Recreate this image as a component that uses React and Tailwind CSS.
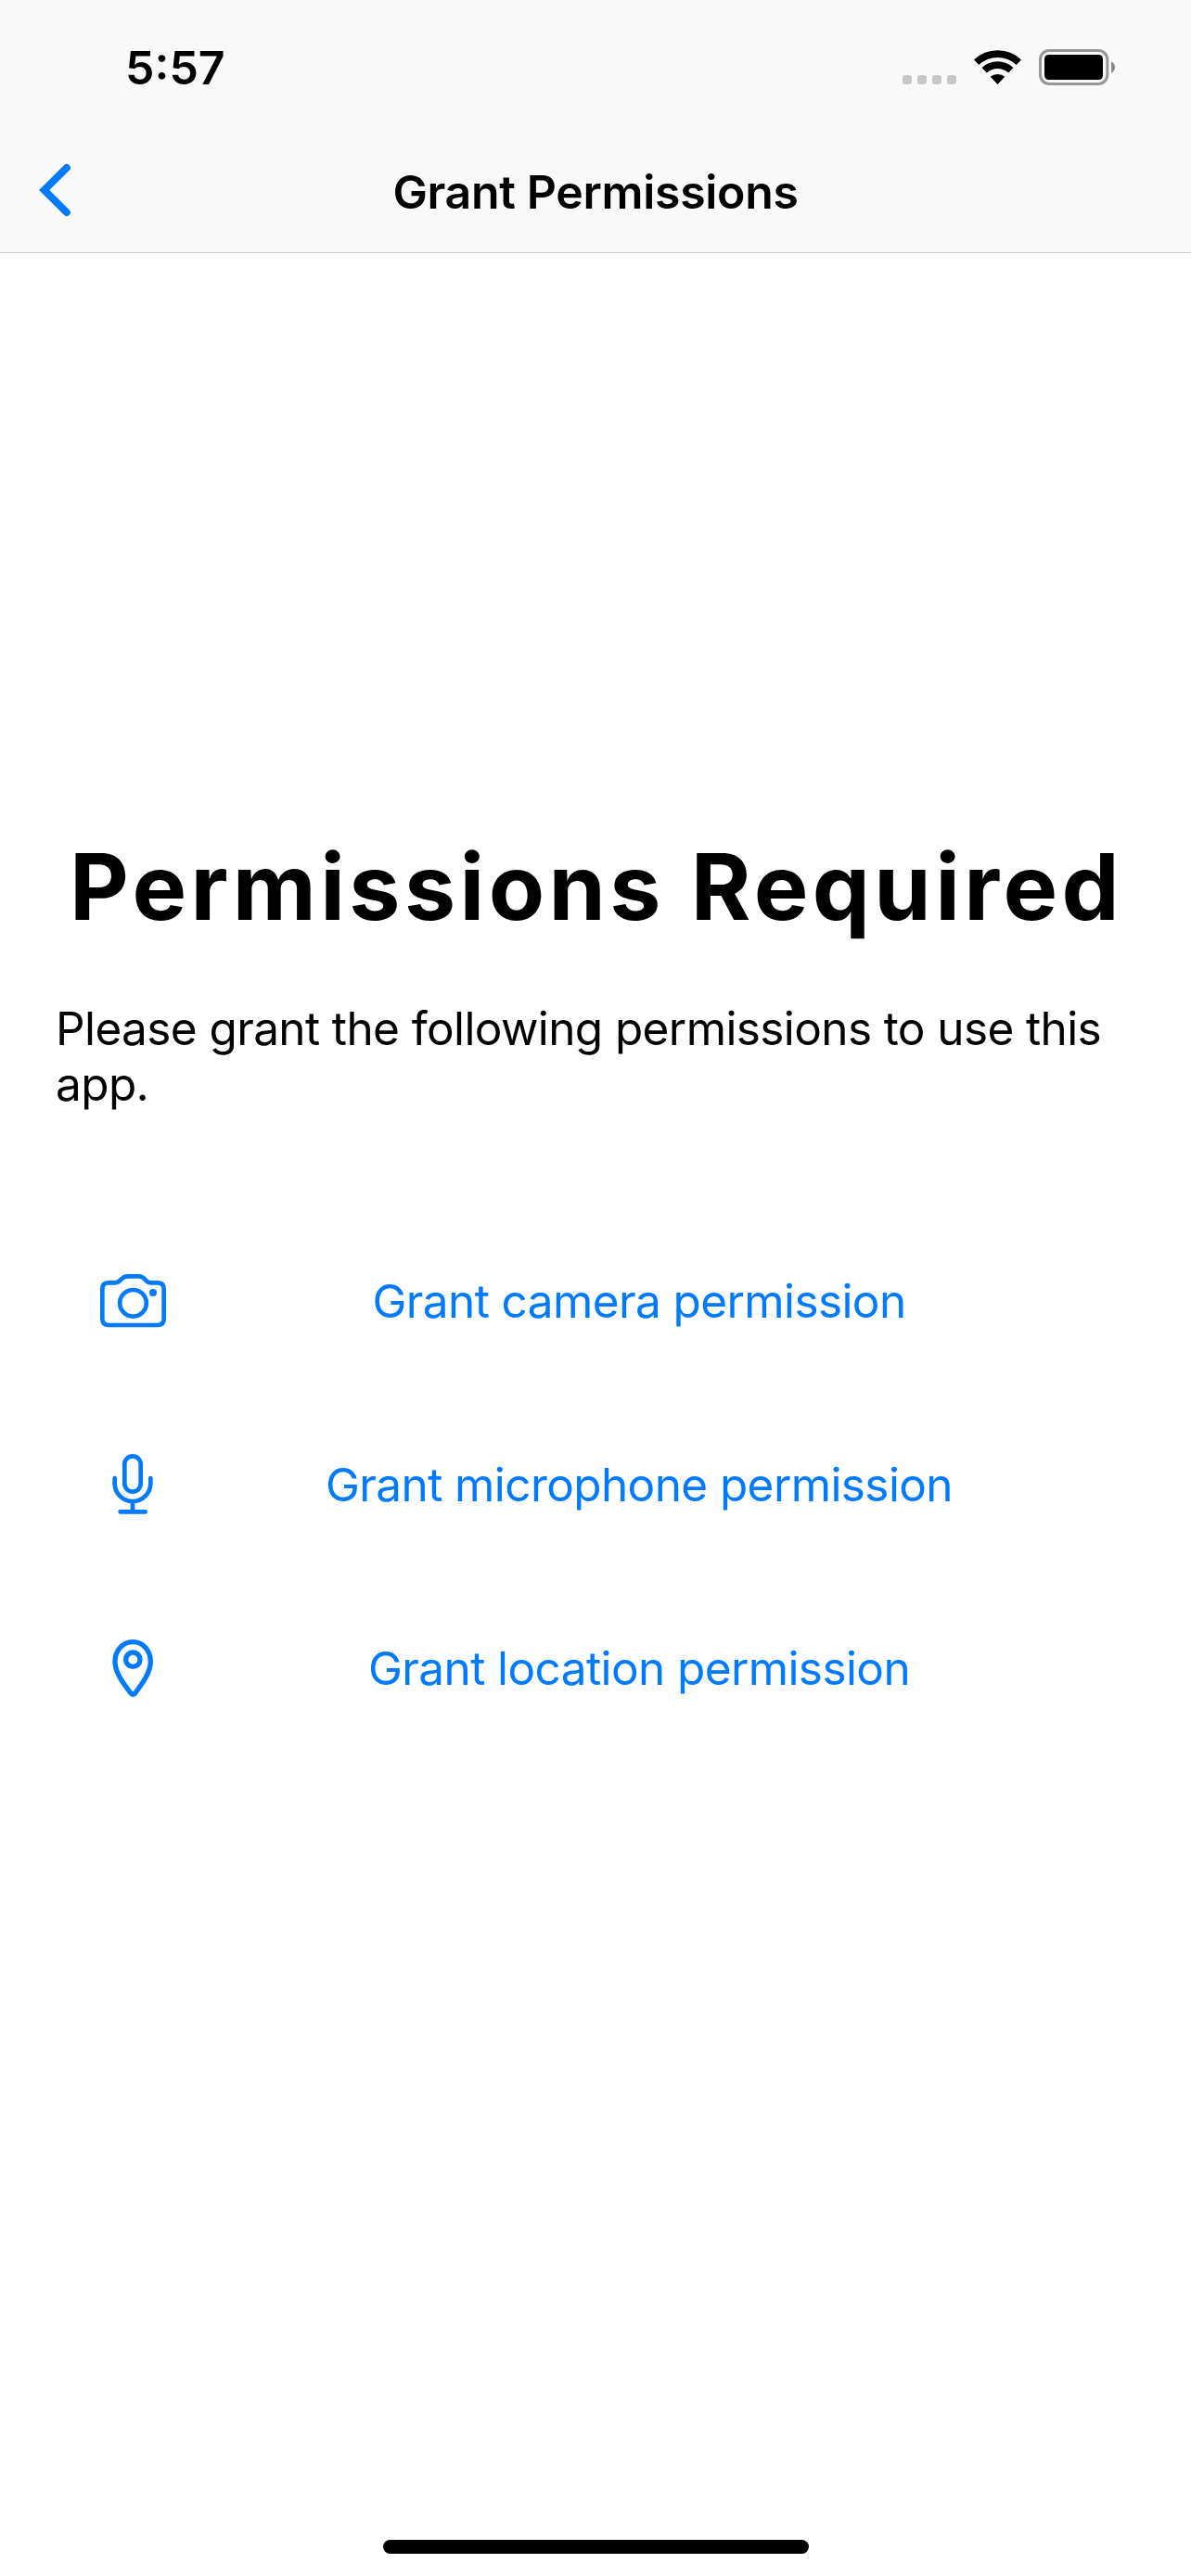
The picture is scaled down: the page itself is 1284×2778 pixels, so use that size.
function WifiIcon() {
  return (
    <svg viewBox="0 0 153 114" className="h-[38px] w-[51px]" fill="none" stroke="black" strokeWidth="23">
      <path d="M8 39.5A99.5 99.5 0 0 1 145 39.5" />
      <path d="M33.5 65.5A62.5 62.5 0 0 1 119.5 65.5" />
      <path d="M76.5 111L53 86.5A36 36 0 0 1 100 86.5Z" fill="black" stroke="none" />
    </svg>
  );
}

function BatteryIcon() {
  return (
    <svg viewBox="0 0 246 117" className="h-[39px] w-[82px]">
      <rect x="4.5" y="4.5" width="217" height="108" rx="29" fill="none" stroke="#979797" strokeWidth="9" />
      <rect x="18" y="18" width="189" height="81" rx="14" />
      <path d="M234 40C242 44 246 51 246 58.5S242 73 234 77Z" fill="#868686" />
    </svg>
  );
}

function CameraIcon() {
  return (
    <svg viewBox="39 69 240 240" className="size-20" fill="none" stroke="currentColor" strokeWidth="14">
      <path d="M61 150Q61 130.5 80 130H102C111 130 115 127 120 121L124 117C130 110.5 135 109 144 109H178C187 109 191 111 197 117L201 121.5C206 127 210 130 217 130H240Q260 130.5 260 150V247Q260 267 240 267H81Q61 267 61 247Z" />
      <circle cx="160.5" cy="196" r="43" />
      <circle cx="225" cy="162" r="12" fill="currentColor" stroke="none" />
    </svg>
  );
}

function MicIcon() {
  return (
    <svg viewBox="39 63 240 240" className="size-20" fill="none" stroke="currentColor" strokeWidth="14" strokeLinecap="round">
      <rect x="133" y="91" width="52" height="115" rx="26" />
      <path d="M101 162V179A58 58 0 0 0 217 179V162M159 237V271M119 271H200" />
    </svg>
  );
}

function PinIcon() {
  return (
    <svg viewBox="39 57 240 240" className="size-20" fill="none" stroke="currentColor" strokeWidth="16">
      <path d="M160 92C127 92 102 120 102 156C102 190 127 224 153 258Q160 265 167 258C192 224 217 190 217 156C217 120 192 92 160 92Z" />
      <circle cx="160" cy="149" r="23" />
    </svg>
  );
}

const permissions = [
  { label: 'Grant camera permission', Icon: CameraIcon },
  { label: 'Grant microphone permission', Icon: MicIcon },
  { label: 'Grant location permission', Icon: PinIcon },
];

export default function App() {
  return (
    <div className="flex h-[2778px] w-[1284px] flex-col bg-white font-['Inter',sans-serif] text-black">
      <header className="h-[273px] border-b border-[#cfcfcf] bg-[#f9f9f9]">
        <div className="flex h-[133px] items-start justify-between pt-[43px] pr-[82px] pl-[135px]">
          <span className="text-[50px] leading-[60px] font-semibold">5:57</span>
          <div className="flex items-start gap-[19px] pt-[10px]">
            <div className="mt-7 flex gap-[6px]">
              {[0, 1, 2, 3].map((i) => (
                <span key={i} className="size-[10px] rounded-[3px] bg-[#c7c7c7]" />
              ))}
            </div>
            <div className="mt-px">
              <WifiIcon />
            </div>
            <BatteryIcon />
          </div>
        </div>
        <div className="grid grid-cols-[1fr_auto_1fr] items-start pt-[43px]">
          <button className="pl-[42px]" aria-label="Back">
            <svg viewBox="126 78 105 174" className="h-[58px] w-[35px]" fill="none" stroke="#007aff" strokeWidth="24" strokeLinecap="round">
              <path d="M215.5 93L143 165L215.5 237" />
            </svg>
          </button>
          <h1 className="pt-px text-[50px] leading-[60px] font-semibold tracking-[-0.33px]">Grant Permissions</h1>
        </div>
      </header>

      <main className="flex flex-1 flex-col pt-[623px]">
        <h2 className="pl-[75px] text-[98.6px] leading-[120px] font-bold tracking-[4.4px] whitespace-nowrap">
          Permissions Required
        </h2>
        <p className="mt-[63px] px-[60px] text-[49.5px] leading-[60px] tracking-[-0.61px]">
          Please grant the following permissions to use this app.
        </p>
        <ul className="mt-[105px] pr-[89px] pl-[103px] text-[#007aff]">
          {permissions.map(({ label, Icon }) => (
            <li key={label}>
              <button className="flex h-[198px] w-full items-center">
                <Icon />
                <span className="flex-1 text-center text-[49.5px] leading-[60px] tracking-[-0.6px]">{label}</span>
              </button>
            </li>
          ))}
        </ul>
      </main>

      <div className="mb-6 ml-[413px] h-[15px] w-[459px] rounded-full bg-black" />
    </div>
  );
}
